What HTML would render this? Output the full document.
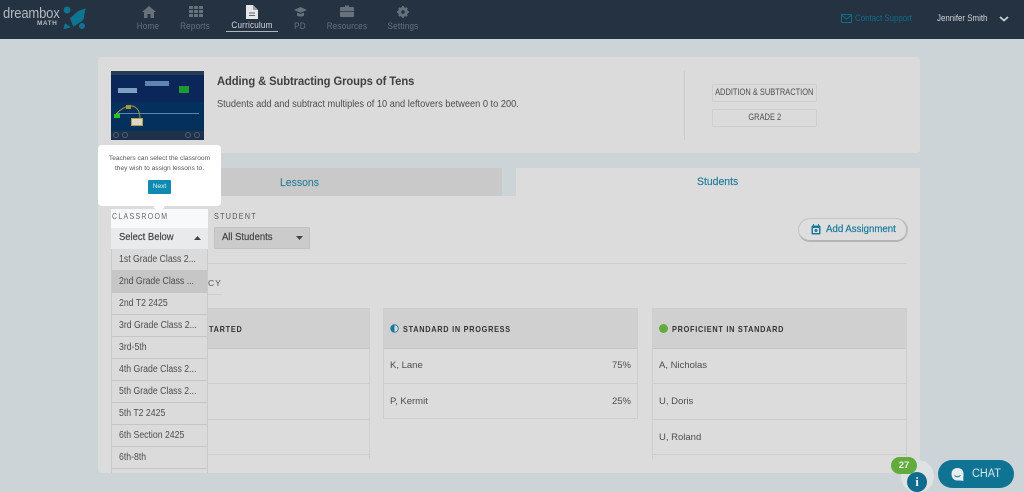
<!DOCTYPE html>
<html><head><meta charset="utf-8">
<style>
html,body{margin:0;padding:0;width:1024px;height:492px;overflow:hidden;background:#ccd4d8;font-family:"Liberation Sans",sans-serif}
#r{position:relative;width:1024px;height:492px;overflow:hidden;filter:blur(.35px)}
#r div,#r svg{position:absolute}
.t{white-space:nowrap;line-height:1;transform-origin:0 0}
.nav{font-size:9.5px;color:#68727e;letter-spacing:.25px;top:21px;width:80px;text-align:center;line-height:11px;transform:scaleX(.85)}
.row{left:112px;width:95px;height:22px;background:#dbdbdb;border-bottom:1px solid #c6c6c6;font-size:10px;color:#4d4d4d;line-height:21px;padding-left:7px;box-sizing:border-box;white-space:nowrap}
.row span{display:inline-block;transform:scaleX(.87);transform-origin:0 0}
.col{background:#dcdcdc;border:1px solid #cecece;box-sizing:border-box}
.hd{background:#d0d0d0;border-bottom:1px solid #c6c6c6;left:0;right:0;top:0;height:39px}
.ht{font-size:8.5px;font-weight:bold;letter-spacing:.85px;color:#333;top:15px;white-space:nowrap;line-height:10px;transform:scaleX(.86);transform-origin:0 0}
.ln{height:1px;background:#cdcdcd;left:0;right:0}
.nm{font-size:9.5px;color:#4d4d4d;left:6px;white-space:nowrap;line-height:11px}
.pc{font-size:9.5px;color:#4d4d4d;right:6px;line-height:11px}
.tag{left:712px;width:105px;height:18px;border:1px solid #cfcfcf;border-radius:2px;box-sizing:border-box;background:#dbdbdb;font-size:9px;color:#4d4d4d;text-align:center;line-height:15px;white-space:nowrap}
.tag span{display:inline-block;transform:scaleX(.83);margin:0 -20px}
</style></head><body><div id="r">

<!-- Header -->
<div style="left:0;top:0;width:1024px;height:39px;background:#253242"></div>
<div class="t" style="left:3px;top:7px;font-size:14.5px;color:#b3b9bf;letter-spacing:-.2px;transform:scaleX(.9)">dreambox</div>
<div class="t" style="left:37px;top:21px;font-size:6.5px;font-weight:bold;color:#b3b9bf;letter-spacing:.5px">MATH</div>
<svg style="left:62px;top:6px" width="25" height="25" viewBox="0 0 25 25">
<path d="M23.700 2.300 L21.300 14 L11.300 20.700 L8 12.300 L16.300 5 Z" fill="#0f7490"/>
<path d="M1.300 23.300 L3 17.300 L9 21.300 Z" fill="#0f7490"/>
<circle cx="5" cy="4" r="3.500" fill="#0f7490"/><circle cx="20" cy="20" r="3" fill="#0f7490"/>
</svg>

<!-- Nav icons -->
<svg style="left:142px;top:6px" width="14" height="12" viewBox="0 0 14 12"><path d="M7 0 L14 6 L12 6 L12 12 L8.500 12 L8.500 8 L5.500 8 L5.500 12 L2 12 L2 6 L0 6 Z" fill="#66717c"/></svg>
<svg style="left:189px;top:6px" width="14" height="11" viewBox="0 0 14 11" fill="#66717c"><rect width="4" height="3"/><rect x="5" width="4" height="3"/><rect x="10" width="4" height="3"/><rect y="4" width="4" height="3"/><rect x="5" y="4" width="4" height="3"/><rect x="10" y="4" width="4" height="3"/><rect y="8" width="4" height="3"/><rect x="5" y="8" width="4" height="3"/><rect x="10" y="8" width="4" height="3"/></svg>
<svg style="left:246px;top:5px" width="12" height="14" viewBox="0 0 12 14"><path d="M0 0 H7 L12 5 V14 H0 Z" fill="#e4e6e8"/><path d="M7 0 V5 H12" fill="#9aa0a6"/><path d="M3 8 H9 M3 10.500 H9" stroke="#5c6570" stroke-width="1"/></svg>
<svg style="left:294px;top:7px" width="13" height="10" viewBox="0 0 13 10"><path d="M6.500 0 L13 3 L6.500 5.800 L0 3 Z" fill="#66717c"/><path d="M3 5.500 L6.500 7 L10 5.500 V8.500 C8 10 5 10 3 8.500 Z" fill="#66717c"/></svg>
<svg style="left:340px;top:5px" width="14" height="12" viewBox="0 0 14 12"><path d="M5 2 V0.500 H9 V2 H13 Q14 2 14 3 V11 Q14 12 13 12 H1 Q0 12 0 11 V3 Q0 2 1 2 Z" fill="#66717c"/><path d="M0 6.500 H14" stroke="#253242" stroke-width=".7"/></svg>
<svg style="left:397px;top:6px" width="12" height="12" viewBox="0 0 12 12"><circle cx="6" cy="6" r="3.700" fill="none" stroke="#66717c" stroke-width="2.600"/><path d="M6 0 V12 M0 6 H12 M1.800 1.800 L10.200 10.200 M10.200 1.800 L1.800 10.200" stroke="#66717c" stroke-width="1.700"/><circle cx="6" cy="6" r="1.800" fill="#253242"/></svg>

<div class="nav" style="left:108px">Home</div>
<div class="nav" style="left:155px">Reports</div>
<div class="nav" style="left:212px;top:20px;color:#d6d9dc">Curriculum</div>
<div style="left:226px;top:31px;width:52px;height:1px;background:#aeb5bb"></div>
<div class="nav" style="left:260px">PD</div>
<div class="nav" style="left:307px">Resources</div>
<div class="nav" style="left:363px">Settings</div>

<svg style="left:841px;top:14px" width="11" height="9" viewBox="0 0 11 9"><rect x=".5" y=".5" width="10" height="8" fill="none" stroke="#0f6c89"/><path d="M.5 1 L5.500 5 L10.500 1" fill="none" stroke="#0f6c89"/></svg>
<div class="t" style="left:855px;top:14px;font-size:9.500px;color:#0f6c89;transform:scaleX(.83)">Contact Support</div>
<div class="t" style="left:937px;top:14px;font-size:9.500px;color:#d2d5d8;transform:scaleX(.83)">Jennifer Smith</div>
<svg style="left:999px;top:16px" width="10" height="6" viewBox="0 0 10 6"><path d="M1 1 L5 4.500 L9 1" fill="none" stroke="#d2d5d8" stroke-width="1.600"/></svg>

<!-- Top card -->
<div style="left:98px;top:57px;width:822px;height:96px;background:#dbdbdb;border-radius:3px"></div>
<div style="left:111px;top:71px;width:93px;height:69px;background:#0b2658;overflow:hidden">
  <div style="left:0;top:0;width:93px;height:4px;background:#243a55"></div>
  <div style="left:0;top:31px;width:93px;height:29px;background:#04305e"></div>
  <div style="left:0;top:60px;width:93px;height:9px;background:#1f3148"></div>
  <div style="left:34px;top:10px;width:24px;height:5px;background:#5f85b0"></div>
  <div style="left:7px;top:17px;width:19px;height:5px;background:#7c9fc4"></div>
  <div style="left:68px;top:15px;width:10px;height:7px;background:#1f9a30"></div>
  <div style="left:5px;top:42px;width:83px;height:1px;background:#5f83aa"></div>
  <div style="left:3px;top:43px;width:6px;height:4px;background:#22c422"></div>
  <div style="left:15px;top:34px;width:5px;height:4px;background:#a39a35"></div>
  <div style="left:20px;top:47px;width:10px;height:6px;background:#d8d8d0;border:1px solid #b3a43a"></div>
  <svg style="left:0;top:0" width="93" height="69"><path d="M5 43 Q16 32 24 36 Q29 39 29 47" fill="none" stroke="#a39a35"/><circle cx="5" cy="64" r="2.500" fill="none" stroke="#4d6078"/><circle cx="14" cy="64" r="2.500" fill="none" stroke="#4d6078"/><circle cx="77" cy="64" r="2.500" fill="none" stroke="#4d6078"/><circle cx="86" cy="64" r="2.500" fill="none" stroke="#4d6078"/></svg>
</div>
<div class="t" style="left:217px;top:75px;font-size:12px;font-weight:bold;color:#404040;letter-spacing:-.1px;transform:scaleX(.935)">Adding &amp; Subtracting Groups of Tens</div>
<div class="t" style="left:217px;top:100px;font-size:10px;color:#4d4d4d;transform:scaleX(.925)">Students add and subtract multiples of 10 and leftovers between 0 to 200.</div>
<div style="left:684px;top:71px;width:1px;height:69px;background:#cccccc"></div>
<div class="tag" style="top:84px"><span>ADDITION &amp; SUBTRACTION</span></div>
<div class="tag" style="top:109px"><span>GRADE 2</span></div>

<!-- Tabs -->
<div style="left:98px;top:168px;width:404px;height:28px;background:#c9c9c9"></div>
<div class="t" style="left:280px;top:178px;font-size:11px;color:#2f7f9c;-webkit-text-stroke:.15px #2f7f9c;transform:scaleX(.95)">Lessons</div>
<div style="left:516px;top:168px;width:404px;height:28px;background:#dcdcdc"></div>
<div class="t" style="left:697px;top:177px;font-size:11px;color:#1a7a9c;-webkit-text-stroke:.15px #1a7a9c;transform:scaleX(.95)">Students</div>

<!-- Main panel -->
<div style="left:98px;top:196px;width:822px;height:277px;background:#dcdcdc;border-radius:0 0 4px 4px"></div>
<div class="t" style="left:214px;top:212px;font-size:8.500px;letter-spacing:1.600px;color:#555;transform:scaleX(.84)">STUDENT</div>
<div style="left:214px;top:227px;width:96px;height:22px;background:#cbcbcb;border:1px solid #c2c2c2;box-sizing:border-box;border-radius:1px"></div>
<div class="t" style="left:222px;top:232px;font-size:10.500px;color:#444;-webkit-text-stroke:.2px #444;transform:scaleX(.9)">All Students</div>
<svg style="left:296px;top:236px" width="7" height="4" viewBox="0 0 7 4"><path d="M0 0 H7 L3.500 4 Z" fill="#444"/></svg>

<div style="left:798px;top:218px;width:110px;height:24px;border:1px solid #c4c4c4;border-bottom:2px solid #b4b4b4;border-right:2px solid #bcbcbc;border-radius:12px;box-sizing:border-box;background:#dedede"></div>
<svg style="left:811px;top:224px" width="10" height="11" viewBox="0 0 10 11"><rect x=".5" y="1.500" width="9" height="9" rx="1" fill="#1a7a9c"/><rect x="2" y="4" width="6" height="5" fill="#dedede"/><circle cx="5" cy="6.500" r="1.500" fill="#1a7a9c"/><path d="M2.500 0 V2 M7.500 0 V2" stroke="#1a7a9c"/></svg>
<div class="t" style="left:826px;top:224px;font-size:10.500px;color:#1a7a9c;-webkit-text-stroke:.2px #1a7a9c;transform:scaleX(.92)">Add Assignment</div>

<div style="left:112px;top:263px;width:795px;height:1px;background:#cfcfcf"></div>
<div class="t" style="left:208px;top:279px;font-size:8.500px;letter-spacing:1px;color:#555">CY</div>
<div style="left:112px;top:294px;width:110px;height:1px;background:#cfcfcf"></div>

<!-- Column 1 -->
<div class="col" style="left:112px;top:308px;width:258px;height:151px;border-bottom:0;overflow:hidden">
  <div class="hd"></div>
  <div class="ht" style="left:70px">NOT STARTED</div>
  <div class="ln" style="top:74px"></div><div class="ln" style="top:110px"></div><div class="ln" style="top:145px"></div>
</div>
<!-- Column 2 -->
<div class="col" style="left:383px;top:308px;width:255px;height:111px">
  <div class="hd"></div>
  <svg style="left:6px;top:15px" width="9" height="9" viewBox="0 0 9 9"><circle cx="4.500" cy="4.500" r="4.200" fill="#1a7a9c"/><path d="M4.500 1.200 A3.300 3.300 0 0 1 4.500 7.800 Z" fill="#dcdcdc"/></svg>
  <div class="ht" style="left:19px">STANDARD IN PROGRESS</div>
  <div class="nm" style="top:51px">K, Lane</div><div class="pc" style="top:51px">75%</div>
  <div class="ln" style="top:74px"></div>
  <div class="nm" style="top:87px">P, Kermit</div><div class="pc" style="top:87px">25%</div>
</div>
<!-- Column 3 -->
<div class="col" style="left:652px;top:308px;width:255px;height:151px;border-bottom:0;overflow:hidden">
  <div class="hd"></div>
  <div style="left:6px;top:15px;width:9px;height:9px;border-radius:50%;background:#62ab3f"></div>
  <div class="ht" style="left:19px">PROFICIENT IN STANDARD</div>
  <div class="nm" style="top:51px">A, Nicholas</div>
  <div class="ln" style="top:74px"></div>
  <div class="nm" style="top:87px">U, Doris</div>
  <div class="ln" style="top:110px"></div>
  <div class="nm" style="top:123px">U, Roland</div>
  <div class="ln" style="top:145px"></div>
</div>

<!-- Highlighted classroom -->
<div style="left:111px;top:209px;width:97px;height:19px;background:#f7f9fa"></div>
<div style="left:111px;top:228px;width:97px;height:21px;background:#e8eaeb"></div>
<div class="t" style="left:112px;top:212px;font-size:8.500px;letter-spacing:1.600px;color:#666;transform:scaleX(.82)">CLASSROOM</div>
<div class="t" style="left:119px;top:232px;font-size:10.500px;color:#444;-webkit-text-stroke:.2px #444;transform:scaleX(.9)">Select Below</div>
<svg style="left:194px;top:236px" width="7" height="4" viewBox="0 0 7 4"><path d="M0 4 H7 L3.500 0 Z" fill="#444"/></svg>

<!-- Dropdown -->
<div style="left:111px;top:249px;width:97px;height:224px;background:#dbdbdb;border-left:1px solid #cacaca;border-right:1px solid #cacaca;box-sizing:border-box"></div>
<div class="row" style="top:249px"><span>1st Grade Class 2...</span></div>
<div class="row" style="top:271px;background:#c6c6c6"><span>2nd Grade Class ...</span></div>
<div class="row" style="top:293px"><span>2nd T2 2425</span></div>
<div class="row" style="top:315px"><span>3rd Grade Class 2...</span></div>
<div class="row" style="top:337px"><span>3rd-5th</span></div>
<div class="row" style="top:359px"><span>4th Grade Class 2...</span></div>
<div class="row" style="top:381px"><span>5th Grade Class 2...</span></div>
<div class="row" style="top:403px"><span>5th T2 2425</span></div>
<div class="row" style="top:425px"><span>6th Section 2425</span></div>
<div class="row" style="top:447px"><span>6th-8th</span></div>

<!-- Tooltip -->
<div style="left:98px;top:145px;width:123px;height:61px;background:#fff;border-radius:4px"></div>
<div style="left:155px;top:203px;width:8px;height:8px;background:#fff;transform:rotate(45deg)"></div>
<div class="t" style="left:98px;top:154px;width:123px;text-align:center;font-size:6.600px;color:#555;line-height:10px;white-space:normal">Teachers can select the classroom<br>they wish to assign lessons to.</div>
<div class="t" style="left:148px;top:180px;width:23px;height:14px;background:#0f8bb2;border-radius:1px;color:#e8f4f8;font-size:6.500px;text-align:center;line-height:14px">Next</div>

<!-- Widgets -->
<div style="left:901px;top:460px;width:33px;height:33px;border-radius:50%;background:#dfe2e3"></div>
<div style="left:907px;top:472px;width:20px;height:20px;border-radius:50%;background:#0f6c8f;color:#e8eef2;font:bold 13px/20px 'Liberation Serif',serif;text-align:center">i</div>
<div style="left:891px;top:457px;width:26px;height:17px;border-radius:9px;background:#62ab3f;color:#e8f2e2;font-size:9.500px;font-weight:bold;text-align:center;line-height:17px">27</div>
<div style="left:938px;top:460px;width:76px;height:28px;border-radius:14px;background:#0f7493"></div>
<svg style="left:950px;top:467px" width="15" height="15" viewBox="0 0 15 15"><path d="M7.500 1 C3.500 1 1.500 3.500 1.500 7 C1.500 10.500 3.500 13.500 7.500 13.500 C10 13.500 12 13.500 13.500 14 C13 12 13.500 9.500 13.500 7 C13.500 3.500 11.500 1 7.500 1 Z" fill="#e6eef1"/><path d="M4.500 8.500 Q7.500 11 10.500 8.500" fill="none" stroke="#0f7493"/></svg>
<div class="t" style="left:972px;top:469px;font-size:11.500px;color:#d8e6eb;transform:scaleX(.95)">CHAT</div>

</div></body></html>
